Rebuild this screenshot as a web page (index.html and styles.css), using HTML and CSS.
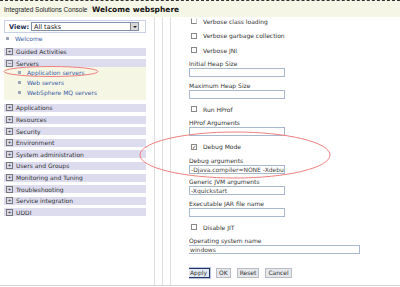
FILE: index.html
```html
<!DOCTYPE html>
<html lang="en">
<head>
    <meta charset="UTF-8">
    <title>Integrated Solutions Console</title>
    <link rel="stylesheet" href="styles.css">
</head>
<body>
    <div class="header">
        <span class="product">Integrated Solutions Console</span>
        <span class="welcome">Welcome websphere</span>
    </div>

    <div class="main">
        <div class="nav">
            <div class="view-box">
                <span class="view-label">View:</span>
                <div class="view-select">
                    <span>All tasks</span>
                    <span class="arrow"></span>
                </div>
            </div>

            <div class="link-row"><span class="dot"></span><span class="link">Welcome</span></div>

            <div class="bar"><span class="plus">+</span>Guided Activities</div>
            <div class="bar"><span class="plus">&minus;</span>Servers</div>
            <div class="sub">
                <div class="link-row"><span class="dot"></span><span class="link">Application servers</span></div>
                <div class="link-row"><span class="dot"></span><span class="link">Web servers</span></div>
                <div class="link-row"><span class="dot"></span><span class="link">WebSphere MQ servers</span></div>
            </div>
            <div class="bar first"><span class="plus">+</span>Applications</div>
            <div class="bar"><span class="plus">+</span>Resources</div>
            <div class="bar"><span class="plus">+</span>Security</div>
            <div class="bar"><span class="plus">+</span>Environment</div>
            <div class="bar"><span class="plus">+</span>System administration</div>
            <div class="bar"><span class="plus">+</span>Users and Groups</div>
            <div class="bar"><span class="plus">+</span>Monitoring and Tuning</div>
            <div class="bar"><span class="plus">+</span>Troubleshooting</div>
            <div class="bar"><span class="plus">+</span>Service integration</div>
            <div class="bar"><span class="plus">+</span>UDDI</div>
        </div>

        <div class="gutter"></div>
        <div class="gutter"></div>
        <div class="gutter last"></div>

        <div class="content">
            <div class="check-row top"><span class="box faint"></span>Verbose class loading</div>
            <div class="check-row"><span class="box"></span>Verbose garbage collection</div>
            <div class="check-row"><span class="box"></span>Verbose JNI</div>

            <div class="field">
                <div class="label">Initial Heap Size</div>
                <div class="input"></div>
            </div>
            <div class="field">
                <div class="label">Maximum Heap Size</div>
                <div class="input"></div>
            </div>

            <div class="check-row"><span class="box"></span>Run HProf</div>

            <div class="field">
                <div class="label">HProf Arguments</div>
                <div class="input"></div>
            </div>

            <div class="check-row"><span class="box checked">&#10003;</span>Debug Mode</div>

            <div class="field">
                <div class="label">Debug arguments</div>
                <div class="input">-Djava.compiler=NONE -Xdebug</div>
            </div>
            <div class="field">
                <div class="label">Generic JVM arguments</div>
                <div class="input">-Xquickstart</div>
            </div>
            <div class="field">
                <div class="label">Executable JAR file name</div>
                <div class="input"></div>
            </div>

            <div class="check-row"><span class="box"></span>Disable JIT</div>

            <div class="field">
                <div class="label">Operating system name</div>
                <div class="input wide">windows</div>
            </div>

            <div class="buttons">
                <span class="btn primary">Apply</span>
                <span class="btn">OK</span>
                <span class="btn">Reset</span>
                <span class="btn">Cancel</span>
            </div>
        </div>
    </div>

    <!-- red hand-drawn marks over the screenshot -->
    <svg class="marks" width="400" height="287" viewBox="0 0 400 287">
        <ellipse cx="51" cy="71.5" rx="47" ry="5" fill="none" stroke="#f08080" stroke-width="1"/>
        <ellipse cx="235" cy="155" rx="95" ry="23" fill="none" stroke="#f08080" stroke-width="1"/>
    </svg>
</body>
</html>
```

FILE: styles.css
```css
body {
    margin: 0;
    width: 400px;
    height: 287px;
    overflow: hidden;
    position: relative;
    background: #fff;
    font-family: "DejaVu Sans", Verdana, sans-serif;
    font-size: 6px;
    color: #333;
}
.header {
    height: 16px;
    border-top: 1px dashed #333;
    background: #f6f6e6;
    display: flex;
    align-items: center;
    padding-left: 4px;
}
.product {
    font-family: "Liberation Sans", Arial, sans-serif;
    font-size: 6.5px;
    color: #222;
    width: 88px;
}
.welcome {
    font-size: 7.5px;
    font-weight: bold;
    color: #111;
}
.main {
    display: flex;
    height: 268px;
    border-bottom: 1px solid #d4d4d4;
}

/* left navigation */
.nav {
    width: 142px;
    padding: 3px 0 0 4px;
    margin-right: 8px;
}
.view-box {
    display: flex;
    align-items: center;
    height: 11px;
    border: 1px solid #c8d0e8;
    padding-left: 4px;
}
.view-label {
    font-weight: bold;
    font-size: 6.5px;
    color: #1a2a50;
    width: 22px;
}
.view-select {
    width: 108px;
    height: 9px;
    border: 1px solid #7f8fa8;
    display: flex;
    align-items: center;
    justify-content: space-between;
    padding-left: 2px;
    font-size: 6.5px;
    color: #222;
    box-sizing: border-box;
}
.arrow {
    width: 7px;
    height: 7px;
    background: #d8d8d8;
    border-left: 1px solid #888;
    position: relative;
}
.arrow::after {
    content: "";
    position: absolute;
    left: 2px;
    top: 3px;
    border: 2px solid transparent;
    border-top: 2px solid #222;
    border-bottom: 0;
}
.link-row {
    display: flex;
    align-items: center;
    height: 11px;
    padding-left: 2px;
}
.dot {
    width: 3px;
    height: 3px;
    background: #9aa6b8;
    margin-right: 6px;
}
.link {
    color: #3a5ba6;
}
.bar {
    height: 8px;
    margin-top: 3.6px;
    background: #dcdcee;
    display: flex;
    align-items: center;
    padding-left: 2px;
    color: #333;
}
.bar.first {
    margin-top: 3.8px;
}
.plus {
    width: 5px;
    height: 5px;
    border: 1px solid #777;
    font-size: 5px;
    line-height: 5px;
    text-align: center;
    margin-right: 3px;
    color: #333;
}
.sub {
    background: #f6f6e4;
    padding-left: 12px;
    height: 33px;
}
.sub .link-row {
    height: 10px;
}
.gutter {
    width: 7px;
    border-left: 1px solid #dedede;
}
.gutter.last {
    width: 18px;
}

/* right form */
.content {
    flex: 1;
    overflow: hidden;
}
.check-row {
    display: flex;
    align-items: center;
    height: 14.5px;
    padding-left: 2px;
    color: #333;
}
.check-row.top {
    margin-top: -3px;
}
.box {
    width: 4px;
    height: 4px;
    border: 1px solid #888;
    background: #fff;
    margin-right: 6px;
    font-size: 5px;
    line-height: 4px;
    text-align: center;
    color: #222;
}
.box.faint {
    border-top-color: transparent;
    border-right-color: #ccc;
}
.field {
    margin: 1.5px 0 3.5px;
}
.label {
    height: 9px;
    line-height: 9px;
    color: #333;
}
.input {
    width: 96px;
    height: 9px;
    border: 1px solid #a9b8cc;
    box-sizing: border-box;
    line-height: 7px;
    padding-left: 1px;
    color: #444;
    overflow: hidden;
    white-space: nowrap;
}
.input.wide {
    width: 172px;
    margin-left: -1px;
}
.buttons {
    display: flex;
    gap: 6px;
    margin-top: 14px;
}
.btn {
    height: 10px;
    line-height: 8px;
    padding: 0 2px;
    border: 1px solid #b8bcc4;
    background: #e6e8ec;
    box-sizing: border-box;
    color: #333;
}
.btn.primary {
    border: 1px solid #22346a;
    outline: 1px solid #b8c4dc;
    background: #e4eaf4;
    margin-left: -2px;
}
.marks {
    position: absolute;
    left: 0;
    top: 0;
}
```
